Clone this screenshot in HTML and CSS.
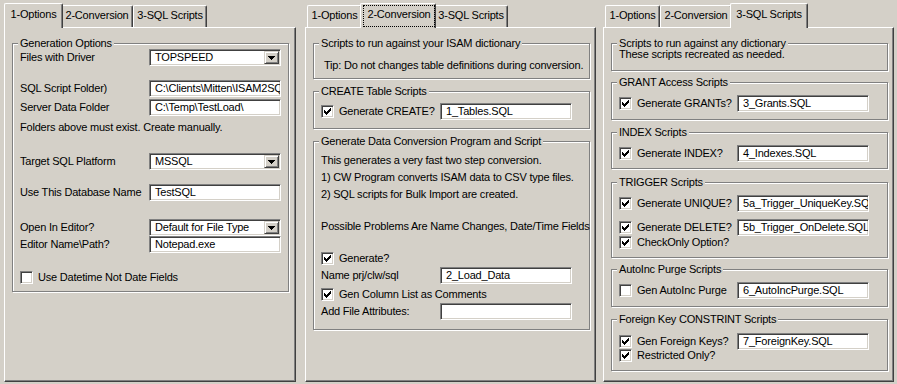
FILE: index.html
```html
<!DOCTYPE html>
<html lang="en">
<head>
    <meta charset="UTF-8">
    <title>ISAM to SQL - Options</title>
    <link rel="stylesheet" href="styles.css">
</head>
<body>
    <div class="screens">

        <!-- Tab 1: general options -->
        <div class="dialog p1">
            <div class="tabs">
                <div class="tab t1 active"><span class="caption">1-Options</span></div>
                <div class="tab t2"><span class="caption">2-Conversion</span></div>
                <div class="tab t3"><span class="caption">3-SQL Scripts</span></div>
            </div>
            <div class="page">
                <fieldset class="group">
                    <legend>Generation Options</legend>
                    <div class="row mt-1">
                        <span class="label">Files with Driver</span>
                        <div class="combo"><span class="value">TOPSPEED</span><span class="drop"><svg viewBox="0 0 7 4" width="7" height="4"><path d="M0 0h7v1h-7zM1 1h5v1h-5zM2 2h3v1h-3zM3 3h1v1h-1z"/></svg></span></div>
                    </div>
                    <div class="row mt-14">
                        <span class="label">SQL Script Folder)</span>
                        <div class="edit">C:\Clients\Mitten\ISAM2SQL\</div>
                    </div>
                    <div class="row mt-2">
                        <span class="label">Server Data Folder</span>
                        <div class="edit">C:\Temp\TestLoad\</div>
                    </div>
                    <div class="note mt-5">Folders above must exist. Create manually.</div>
                    <div class="row mt-19">
                        <span class="label">Target SQL Platform</span>
                        <div class="combo"><span class="value">MSSQL</span><span class="drop"><svg viewBox="0 0 7 4" width="7" height="4"><path d="M0 0h7v1h-7zM1 1h5v1h-5zM2 2h3v1h-3zM3 3h1v1h-1z"/></svg></span></div>
                    </div>
                    <div class="row mt-14">
                        <span class="label">Use This Database Name</span>
                        <div class="edit">TestSQL</div>
                    </div>
                    <div class="row mt-18">
                        <span class="label">Open In Editor?</span>
                        <div class="combo"><span class="value">Default for File Type</span><span class="drop"><svg viewBox="0 0 7 4" width="7" height="4"><path d="M0 0h7v1h-7zM1 1h5v1h-5zM2 2h3v1h-3zM3 3h1v1h-1z"/></svg></span></div>
                    </div>
                    <div class="row">
                        <span class="label">Editor Name\Path?</span>
                        <div class="edit">Notepad.exe</div>
                    </div>
                    <div class="checkline mt-18">
                        <span class="check"></span>Use Datetime Not Date Fields
                    </div>
                    <div class="end pb-7"></div>
                </fieldset>
            </div>
        </div>

        <!-- Tab 2: conversion -->
        <div class="dialog p2">
            <div class="tabs">
                <div class="tab t1"><span class="caption">1-Options</span></div>
                <div class="tab t2 active focused"><span class="caption">2-Conversion</span></div>
                <div class="tab t3"><span class="caption">3-SQL Scripts</span></div>
            </div>
            <div class="page">
                <fieldset class="group">
                    <legend>Scripts to run against your ISAM dictionary</legend>
                    <div class="note tip mt-11">Tip: Do not changes table definitions during conversion.</div>
                    <div class="end pb-6"></div>
                </fieldset>

                <fieldset class="group mt-7">
                    <legend>CREATE Table Scripts</legend>
                    <div class="row mt-7">
                        <span class="label checkline"><span class="check on"><svg viewBox="0 0 7 7" width="7" height="7"><path d="M0 2h1v3h-1zM1 3h1v3h-1zM2 4h1v3h-1zM3 3h1v3h-1zM4 2h1v3h-1zM5 1h1v3h-1zM6 0h1v3h-1z"/></svg></span>Generate CREATE?</span>
                        <div class="edit">1_Tables.SQL</div>
                    </div>
                    <div class="end pb-8"></div>
                </fieldset>

                <fieldset class="group mt-7">
                    <legend>Generate Data Conversion Program and Script</legend>
                    <div class="lines mt-6">
                        <p>This generates a very fast two step conversion.</p>
                        <p>1) CW Program converts ISAM data to CSV type files.</p>
                        <p>2) SQL scripts for Bulk Import are created.</p>
                    </div>
                    <div class="lines mt-15">
                        <p>Possible Problems Are Name Changes, Date/Time Fields</p>
                    </div>
                    <div class="checkline mt-17">
                        <span class="check on"><svg viewBox="0 0 7 7" width="7" height="7"><path d="M0 2h1v3h-1zM1 3h1v3h-1zM2 4h1v3h-1zM3 3h1v3h-1zM4 2h1v3h-1zM5 1h1v3h-1zM6 0h1v3h-1z"/></svg></span>Generate?
                    </div>
                    <div class="row mt-2">
                        <span class="label">Name prj/clw/sql</span>
                        <div class="edit">2_Load_Data</div>
                    </div>
                    <div class="checkline mt-4">
                        <span class="check on"><svg viewBox="0 0 7 7" width="7" height="7"><path d="M0 2h1v3h-1zM1 3h1v3h-1zM2 4h1v3h-1zM3 3h1v3h-1zM4 2h1v3h-1zM5 1h1v3h-1zM6 0h1v3h-1z"/></svg></span>Gen Column List as Comments
                    </div>
                    <div class="row mt-2">
                        <span class="label">Add File Attributes:</span>
                        <div class="edit"></div>
                    </div>
                    <div class="end pb-9"></div>
                </fieldset>
            </div>
        </div>

        <!-- Tab 3: SQL scripts -->
        <div class="dialog p3">
            <div class="tabs">
                <div class="tab t1"><span class="caption">1-Options</span></div>
                <div class="tab t2"><span class="caption">2-Conversion</span></div>
                <div class="tab t3 active"><span class="caption">3-SQL Scripts</span></div>
            </div>
            <div class="page">
                <fieldset class="group">
                    <legend>Scripts to run against any dictionary</legend>
                    <div class="note">These scripts recreated as needed.</div>
                    <div class="end pb-9"></div>
                </fieldset>

                <fieldset class="group mt-6">
                    <legend>GRANT Access Scripts</legend>
                    <div class="row mt-8">
                        <span class="label checkline"><span class="check on"><svg viewBox="0 0 7 7" width="7" height="7"><path d="M0 2h1v3h-1zM1 3h1v3h-1zM2 4h1v3h-1zM3 3h1v3h-1zM4 2h1v3h-1zM5 1h1v3h-1zM6 0h1v3h-1z"/></svg></span>Generate GRANTs?</span>
                        <div class="edit">3_Grants.SQL</div>
                    </div>
                    <div class="end pb-7"></div>
                </fieldset>

                <fieldset class="group mt-7">
                    <legend>INDEX Scripts</legend>
                    <div class="row mt-8">
                        <span class="label checkline"><span class="check on"><svg viewBox="0 0 7 7" width="7" height="7"><path d="M0 2h1v3h-1zM1 3h1v3h-1zM2 4h1v3h-1zM3 3h1v3h-1zM4 2h1v3h-1zM5 1h1v3h-1zM6 0h1v3h-1z"/></svg></span>Generate INDEX?</span>
                        <div class="edit">4_Indexes.SQL</div>
                    </div>
                    <div class="end pb-6"></div>
                </fieldset>

                <fieldset class="group mt-8">
                    <legend>TRIGGER Scripts</legend>
                    <div class="row mt-8">
                        <span class="label checkline"><span class="check on"><svg viewBox="0 0 7 7" width="7" height="7"><path d="M0 2h1v3h-1zM1 3h1v3h-1zM2 4h1v3h-1zM3 3h1v3h-1zM4 2h1v3h-1zM5 1h1v3h-1zM6 0h1v3h-1z"/></svg></span>Generate UNIQUE?</span>
                        <div class="edit">5a_Trigger_UniqueKey.SQL</div>
                    </div>
                    <div class="row mt-7">
                        <span class="label checkline"><span class="check on"><svg viewBox="0 0 7 7" width="7" height="7"><path d="M0 2h1v3h-1zM1 3h1v3h-1zM2 4h1v3h-1zM3 3h1v3h-1zM4 2h1v3h-1zM5 1h1v3h-1zM6 0h1v3h-1z"/></svg></span>Generate DELETE?</span>
                        <div class="edit">5b_Trigger_OnDelete.SQL</div>
                    </div>
                    <div class="checkline">
                        <span class="check on"><svg viewBox="0 0 7 7" width="7" height="7"><path d="M0 2h1v3h-1zM1 3h1v3h-1zM2 4h1v3h-1zM3 3h1v3h-1zM4 2h1v3h-1zM5 1h1v3h-1zM6 0h1v3h-1z"/></svg></span>CheckOnly Option?
                    </div>
                    <div class="end pb-8"></div>
                </fieldset>

                <fieldset class="group mt-6">
                    <legend>AutoInc Purge Scripts</legend>
                    <div class="row mt-8">
                        <span class="label checkline"><span class="check"></span>Gen AutoInc Purge</span>
                        <div class="edit">6_AutoIncPurge.SQL</div>
                    </div>
                    <div class="end pb-7"></div>
                </fieldset>

                <fieldset class="group mt-7">
                    <legend>Foreign Key CONSTRINT Scripts</legend>
                    <div class="row mt-9">
                        <span class="label checkline"><span class="check on"><svg viewBox="0 0 7 7" width="7" height="7"><path d="M0 2h1v3h-1zM1 3h1v3h-1zM2 4h1v3h-1zM3 3h1v3h-1zM4 2h1v3h-1zM5 1h1v3h-1zM6 0h1v3h-1z"/></svg></span>Gen Foreign Keys?</span>
                        <div class="edit">7_ForeignKey.SQL</div>
                    </div>
                    <div class="checkline mt-n1">
                        <span class="check on"><svg viewBox="0 0 7 7" width="7" height="7"><path d="M0 2h1v3h-1zM1 3h1v3h-1zM2 4h1v3h-1zM3 3h1v3h-1zM4 2h1v3h-1zM5 1h1v3h-1zM6 0h1v3h-1z"/></svg></span>Restricted Only?
                    </div>
                    <div class="end pb-8"></div>
                </fieldset>
            </div>
        </div>

    </div>
</body>
</html>
```

FILE: styles.css
```css
/* Reset some default styles */
body, fieldset, legend, p {
    margin: 0;
    padding: 0;
}

/* Classic dialog look */
body {
    font-family: 'Liberation Sans', Arial, sans-serif;
    font-size: 11px;
    letter-spacing: -0.2px;
    line-height: 13px;
    color: #000;
    background: #d4d0c8;
}

.screens {
    display: flex;
    padding-top: 3px;
}

.dialog {
    width: 291px;
}

.dialog.p1 {
    width: 292px;
    margin-left: 4px;
}

.dialog.p2 {
    margin-left: 9px;
}

.dialog.p3 {
    margin-left: 7px;
}

/* Tab strip */
.tabs {
    display: flex;
    align-items: flex-end;
    height: 24px;
    padding-left: 2px;
}

.tab {
    box-sizing: border-box;
    width: var(--w);
    height: 22px;
    padding-top: 3px;
    text-align: center;
    white-space: nowrap;
    border: 1px solid #fff;
    border-right-color: #404040;
    border-bottom: none;
    border-radius: 2px 2px 0 0;
    box-shadow: inset -1px 0 #808080;
}

.tab.t1 { --w: 55px; }
.tab.t2 { --w: 72px; }
.tab.t3 { --w: 74px; }

.tab.active {
    position: relative;
    z-index: 1;
    width: calc(var(--w) + 4px);
    height: 25px;
    margin: 0 -2px -1px;
    padding-top: 4px;
    background: #d4d0c8;
}

/* keyboard focus rectangle */
.tab.focused {
    padding-top: 0;
}

.tab.focused .caption {
    display: block;
    height: 22px;
    box-sizing: border-box;
    margin: 1px 0 0 2px;
    padding-top: 2px;
    border: 1px dotted #000;
}

/* Tab page */
.page {
    box-sizing: border-box;
    height: 355px;
    padding: 10px 0 0 7px;
    border: 1px solid;
    border-color: #fff #404040 #404040 #fff;
    box-shadow: inset -1px -1px #808080;
}

/* Etched group boxes */
.group {
    box-sizing: border-box;
    width: 277px;
    min-width: 0;
    padding: 0 7px;
    border: 1px solid #808080;
    box-shadow: 1px 1px #fff, inset 1px 1px #fff;
}

.group legend {
    padding: 0 2px;
    margin-left: -2px;
    line-height: 10px;
    background: #d4d0c8;
}

.row {
    display: flex;
    align-items: center;
    height: 17px;
}

.row .label {
    flex: none;
    width: 129px;
    white-space: nowrap;
}

.p2 .row .label {
    width: 119px;
}

.p3 .row .label {
    width: 118px;
}

.note {
    height: 13px;
    white-space: nowrap;
}

.note.tip {
    margin-left: 3px;
}

.lines p {
    line-height: 17px;
    white-space: nowrap;
}

.checkline {
    display: flex;
    align-items: center;
    gap: 5px;
    height: 13px;
    white-space: nowrap;
}

/* Sunken controls */
.edit,
.combo,
.check {
    box-sizing: border-box;
    background: #fff;
    border: 1px solid;
    border-color: #808080 #fff #fff #808080;
    box-shadow: inset 1px 1px #404040, inset -1px -1px #d4d0c8;
}

.edit {
    flex: none;
    width: 132px;
    height: 17px;
    padding: 0 1px 0 5px;
    line-height: 15px;
    white-space: nowrap;
    overflow: hidden;
}

.combo {
    flex: none;
    display: flex;
    width: 132px;
    height: 17px;
    padding: 1px;
}

.combo .value {
    flex: 1;
    padding-left: 4px;
    white-space: nowrap;
    overflow: hidden;
}

.combo .drop {
    box-sizing: border-box;
    display: flex;
    align-items: center;
    justify-content: center;
    width: 15px;
    background: #d4d0c8;
    border: 1px solid;
    border-color: #d4d0c8 #404040 #404040 #d4d0c8;
    box-shadow: inset 1px 1px #fff, inset -1px -1px #808080;
}

.combo .drop svg {
    display: block;
    shape-rendering: crispEdges;
}

.check {
    flex: none;
    width: 13px;
    height: 13px;
    padding: 2px;
}

.check svg {
    display: block;
    shape-rendering: crispEdges;
}

/* spacing between rows */
.mt-n1 { margin-top: -1px; }
.mt-1 { margin-top: 1px; }
.mt-2 { margin-top: 2px; }
.mt-4 { margin-top: 4px; }
.mt-5 { margin-top: 5px; }
.mt-6 { margin-top: 6px; }
.mt-7 { margin-top: 7px; }
.mt-8 { margin-top: 8px; }
.mt-9 { margin-top: 9px; }
.mt-11 { margin-top: 11px; }
.mt-14 { margin-top: 14px; }
.mt-15 { margin-top: 15px; }
.mt-17 { margin-top: 17px; }
.mt-18 { margin-top: 18px; }
.mt-19 { margin-top: 19px; }

.end.pb-6 { height: 6px; }
.end.pb-7 { height: 7px; }
.end.pb-8 { height: 8px; }
.end.pb-9 { height: 9px; }
```
